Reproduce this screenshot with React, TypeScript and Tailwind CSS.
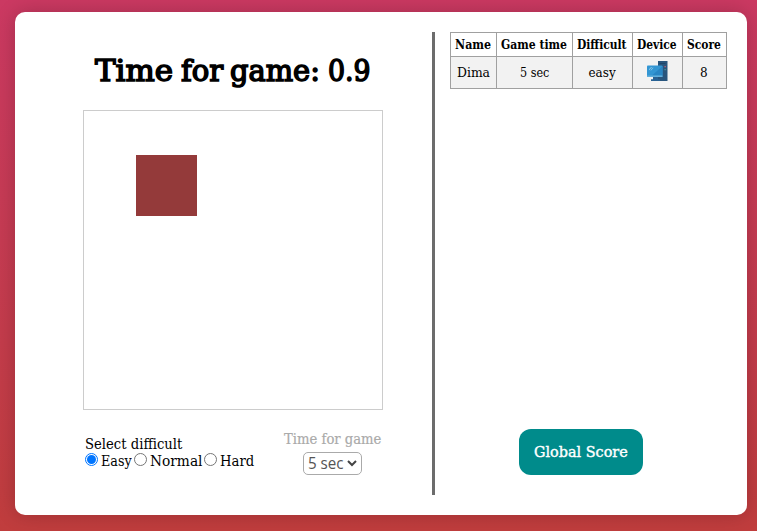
import { useLayoutEffect, useRef, useState } from "react";

type FitProps = { text: string; width: number; className?: string };

// Condenses a line of slab serif text to the width of its label.
function Fit({ text, width, className = "" }: FitProps) {
  const ref = useRef<HTMLSpanElement>(null);
  const [scale, setScale] = useState(1);
  useLayoutEffect(() => {
    if (ref.current) setScale(width / ref.current.offsetWidth);
  }, [width, text]);
  return (
    <span className={`inline-flex justify-start whitespace-nowrap ${className}`} style={{ width }}>
      <span ref={ref} className="block shrink-0 origin-left" style={{ transform: `scaleX(${scale})` }}>
        {text}
      </span>
    </span>
  );
}

function Computer() {
  return (
    <svg width="21" height="21" viewBox="0 0 21 21" className="-mt-[2px] block">
      <path d="M11 0h9.5v20H11z" fill="#28557d" />
      <path d="M12.5 2h6v1h-6z" fill="#1d4569" />
      <path d="M17.5 5h1.3v1.3h-1.3z" fill="#c95d70" />
      <path d="M17.5 8h1.3v1.3h-1.3z" fill="#439b91" />
      <rect y="4.5" width="15.5" height="11.5" rx="0.8" fill="#3396d3" />
      <path d="M15.5 5v9.5H5z" fill="#2885c4" />
      <path d="M0 14.5h15.5V16H0z" fill="#62aedb" />
      <path d="M2 8.3 4.2 6h.8L2 9.2zM3.5 9.2 6.2 6.3v.8L4 9.5z" fill="#a8d7ef" />
      <path d="M6 16h5v2.3h2V20H4v-1.7h2z" fill="#286294" />
    </svg>
  );
}

function Radio({ checked = false }: { checked?: boolean }) {
  return (
    <span className={`flex size-[13px] shrink-0 items-center justify-center rounded-full border bg-white ${checked ? "border-[#0075ff]" : "border-[#767676]"}`}>
      {checked && <span className="size-[9px] rounded-full bg-[#0075ff]" />}
    </span>
  );
}

const columns = [
  { head: "Name", headWidth: 36, value: "Dima", valueWidth: 33, size: "w-[46px]" },
  { head: "Game time", headWidth: 66, value: "5 sec", valueWidth: 29, size: "w-[76px]" },
  { head: "Difficult", headWidth: 50, value: "easy", valueWidth: 27, size: "w-[60px]" },
  { head: "Device", headWidth: 40, value: "", valueWidth: 0, size: "w-[50px]" },
  { head: "Score", headWidth: 34, value: "8", valueWidth: 8, size: "w-[44px]" },
];

const title = [
  { word: "Time", width: 78 },
  { word: "for", width: 42 },
  { word: "game:", width: 90 },
  { word: "0.9", width: 43 },
];

export default function App() {
  return (
    <main className="h-[531px] w-[757px] overflow-hidden bg-linear-to-b from-[#cb3962] to-[#c03d3d] pt-[12px] pr-[10px] pl-[15px] font-['DejaVu_Serif',serif] text-black">
      <section className="flex h-[503px] w-[732px] rounded-[10px] bg-white py-[20px] shadow-[0_0_20px_rgba(0,0,0,0.2)]">
        <div className="w-[417px] pl-[68px]">
          <h1 className="flex h-[78px] gap-[7.5px] pt-[17px] pl-[12px] text-[30.5px] leading-[44px] font-normal [-webkit-text-stroke:1.6px_black]">
            {title.map((t) => (
              <Fit key={t.word} text={t.word} width={t.width} />
            ))}
          </h1>
          <div className="h-[300px] w-[300px] border border-[#ccc] pt-[44px] pl-[52px]">
            <div className="size-[61px] bg-[#943a3a]" />
          </div>
          <div className="flex pl-[2px] text-[14px]">
            <div className="w-[199px] pt-[26px] leading-[17px]">
              <Fit text="Select difficult" width={97} className="flex h-[17px]" />
              <div className="flex h-[17px]">
                <Radio checked />
                <Fit text="Easy" width={31} className="ml-[3px]" />
                <span className="ml-[2px]"><Radio /></span>
                <Fit text="Normal" width={52} className="ml-[3px]" />
                <span className="ml-[2px]"><Radio /></span>
                <Fit text="Hard" width={34} className="ml-[3px]" />
              </div>
            </div>
            <div className="pt-[19px] text-[#aaa]">
              <Fit text="Time for game" width={97} className="flex h-[22px] leading-[19px] [-webkit-text-stroke:0.2px_#aaa]" />
              <div className="ml-[19px] flex h-[23px] w-[59px] items-center rounded-[5px] border border-[#aaa] pl-[4px] font-['Open_Sans',sans-serif] text-[16px] leading-[21px] text-[#555]">
                <Fit text="5 sec" width={36} />
                <svg width="10" height="7" viewBox="0 0 10 7" className="ml-[3px]">
                  <path d="m1 1 4 4 4-4" fill="none" stroke="#444" strokeWidth="2" />
                </svg>
              </div>
            </div>
          </div>
        </div>
        <div className="h-[463px] w-[3px] bg-[#6c6c6c]" />
        <aside className="flex flex-col pl-[15px]">
          <div className="w-[277px] border-t border-l border-[#a0a0a0] text-[12px]">
            <div className="flex h-[24px] font-bold">
              {columns.map((c) => (
                <div key={c.head} className={`flex items-center border-r border-b border-[#a0a0a0] pl-[4px] ${c.size}`}>
                  <Fit text={c.head} width={c.headWidth} />
                </div>
              ))}
            </div>
            <div className="flex h-[32px] bg-[#f2f2f2]">
              {columns.map((c) => (
                <div key={c.head} className={`flex items-center justify-center border-r border-b border-[#a0a0a0] pr-px ${c.size}`}>
                  {c.value ? <Fit text={c.value} width={c.valueWidth} /> : <Computer />}
                </div>
              ))}
            </div>
          </div>
          <button className="mt-[340px] ml-[69px] flex h-[46px] w-[124px] items-center justify-center rounded-[12px] bg-[#008b8b] text-[15px] text-white">
            <Fit text="Global Score" width={94} className="[-webkit-text-stroke:0.4px_white]" />
          </button>
        </aside>
      </section>
    </main>
  );
}
